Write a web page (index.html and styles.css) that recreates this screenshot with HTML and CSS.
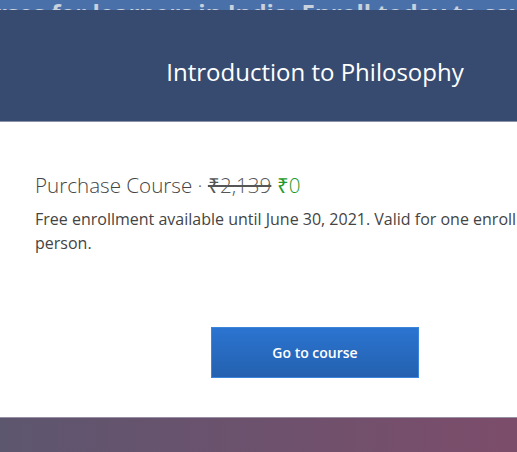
FILE: index.html
```html
<!DOCTYPE html>
<html>
<head>
<meta charset="utf-8">
<link rel="stylesheet" href="styles.css">
</head>
<body>
<div class="page">
  <div class="promo"><span class="promo-text">courses for learners in India: Enroll today to save</span></div>
  <header class="hero">
    <h1 class="title">Introduction to Philosophy</h1>
  </header>
  <main class="content">
    <h2 class="purchase">Purchase Course <span class="dot">·</span> <span class="old">₹2,139</span> <span class="new">₹0</span></h2>
    <p class="desc">Free enrollment available until June 30, 2021. Valid for one enrollment per person.</p>
    <div class="actions">
      <button class="btn">Go to course</button>
    </div>
  </main>
  <footer class="foot"></footer>
</div>
</body>
</html>
```
FILE: styles.css
```css
html, body {
  margin: 0;
  padding: 0;
  overflow: hidden;
  background: #fff;
}
.page {
  width: 630px;
  font-family: "Open Sans", sans-serif;
}
.promo {
  height: 10px;
  background: #4a70aa;
  overflow: hidden;
  white-space: nowrap;
}
.promo-text {
  display: block;
  font-size: 24px;
  font-weight: 700;
  line-height: 24px;
  color: #c9d1dc;
  margin-top: 1px;
  margin-left: -47px;
}
.hero {
  height: 111px;
  box-sizing: content-box;
  background: #374b70;
  border-bottom: 1px solid #8a93a6;
  display: flex;
  align-items: center;
  justify-content: center;
}
.title {
  margin: 0;
  font-size: 24px;
  font-weight: 400;
  color: #fff;
  padding-top: 12px;
}
.content {
  padding: 49px 35px 0;
  height: 295px;
  box-sizing: border-box;
}
.purchase {
  margin: 0;
  font-size: 20.6px;
  font-weight: 300;
  color: #444;
  line-height: 28px;
}
.dot { color: #666; }
.old {
  text-decoration: line-through;
  color: #555;
}
.new { color: #1f9a2e; }
.desc {
  margin: 8px 0 0;
  font-size: 16px;
  line-height: 24px;
  color: #444;
}
.actions {
  display: flex;
  justify-content: center;
  margin-top: 72px;
}
.btn {
  width: 208px;
  height: 51px;
  border: 1px solid #3b86dc;
  background: linear-gradient(#2b74d0, #2461b0);
  color: #fff;
  font-family: "Open Sans", sans-serif;
  font-weight: 600;
  font-size: 14px;
  cursor: pointer;
}
.foot {
  height: 35px;
  border-top: 1px solid #9a8ea3;
  background: linear-gradient(90deg, #5d566f, #834b6a);
}
```
